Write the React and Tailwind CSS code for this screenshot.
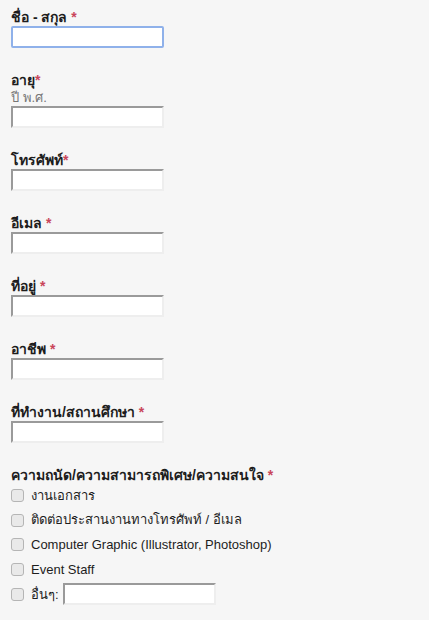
import React from 'react';

const fields = [
  { label: 'ชื่อ - สกุล', space: true, focused: true },
  { label: 'อายุ', space: false, help: 'ปี พ.ศ.' },
  { label: 'โทรศัพท์', space: false },
  { label: 'อีเมล', space: true },
  { label: 'ที่อยู่', space: true },
  { label: 'อาชีพ', space: true },
  { label: 'ที่ทำงาน/สถานศึกษา', space: true },
];

const options = [
  'งานเอกสาร',
  'ติดต่อประสานงานทางโทรศัพท์ / อีเมล',
  'Computer Graphic (Illustrator, Photoshop)',
  'Event Staff',
];

function TextBox({ focused, className = '' }) {
  return (
    <input
      type="text"
      className={
        'block h-[22px] w-[153px] bg-white px-1 text-[13px] outline-none ' +
        (focused
          ? 'rounded-[2px] border-2 border-[#8fb1ea] '
          : 'border-2 border-t-[#9a9a9a] border-l-[#9a9a9a] border-r-[#eeeeee] border-b-[#eeeeee] ') +
        className
      }
    />
  );
}

function Box() {
  return (
    <span className="inline-block h-[13px] w-[13px] shrink-0 rounded-[3px] border border-[#b5b5b5] bg-[#e9e9e9]"></span>
  );
}

export default function App() {
  return (
    <div
      className="min-h-screen bg-[#f6f6f6] px-[11px] pt-[9px] text-[13px] text-[#1d1d1d]"
      style={{ fontFamily: 'Tahoma, "Liberation Sans", "Noto Sans", sans-serif' }}
    >
      {fields.map((f, i) => (
        <div key={i} className="mb-[24px]">
          <div className="text-[14px] font-bold leading-[17px]">
            {f.label}
            {f.space ? ' ' : ''}
            <span className="text-[#c9455a]">*</span>
          </div>
          {f.help && <div className="leading-[17px] text-[#777]">{f.help}</div>}
          <TextBox focused={f.focused} />
        </div>
      ))}

      <div className="text-[14px] font-bold leading-[17px]">
        ความถนัด/ความสามารถพิเศษ/ความสนใจ <span className="text-[#c9455a]">*</span>
      </div>
      <div className="-mt-[1px] flex flex-col">
        {options.map((o) => (
          <label key={o} className="flex h-[24.75px] items-center gap-[7px]">
            <Box />
            <span>{o}</span>
          </label>
        ))}
        <label className="flex h-[24.75px] items-center gap-[7px]">
          <Box />
          <span>อื่นๆ:</span>
          <TextBox className="-ml-[3px]" />
        </label>
      </div>
    </div>
  );
}
